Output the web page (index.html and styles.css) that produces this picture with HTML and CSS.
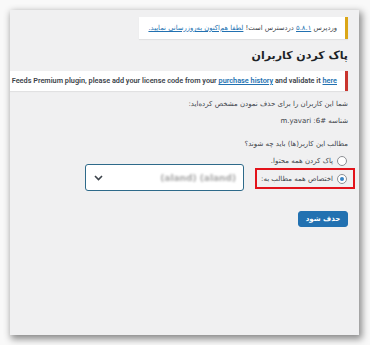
FILE: index.html
```html
<!DOCTYPE html>
<html lang="fa">
<head>
<meta charset="utf-8">
<link rel="stylesheet" href="styles.css">
</head>
<body>
<div class="card" dir="rtl">
  <div class="notice notice-update">
    وردپرس <a href="#">۵.۸.۱</a> دردسترس است! <a href="#">لطفا هم‌اکنون به‌روزرسانی نمایید.</a>
  </div>
  <h1 class="title">پاک کردن کاربران</h1>
  <div class="notice notice-error">
    <span class="ltr">To receive updates for RSS Feeds Premium plugin, please add your license code from your <a href="#">purchase history</a> and validate it <a href="#">here</a></span>
  </div>
  <p class="intro">شما این کاربران را برای حذف نمودن مشخص کرده‌اید:</p>
  <p class="user">شناسه #6: m.yavari</p>
  <p class="question">مطالب این کاربر(ها) باید چه شوند؟</p>
  <div class="option option-first">
    <span class="radio"></span>
    <span>پاک کردن همه محتوا.</span>
  </div>
  <div class="option-row">
    <div class="option highlight">
      <span class="radio checked"></span>
      <span>اختصاص همه مطالب به:</span>
    </div>
    <div class="select">
      <span class="blurred">(aland) (aland)</span>
      <svg class="chev" width="9" height="6" viewBox="0 0 9 6"><path d="M1 1l3.5 3.5L8 1" fill="none" stroke="#3c434a" stroke-width="1.6"/></svg>
    </div>
  </div>
  <div class="actions">
    <button class="btn">حذف شود</button>
  </div>
</div>
</body>
</html>
```
FILE: styles.css
```css
html, body {
  margin: 0;
  padding: 0;
}
body {
  background: #f9f9f9;
  width: 370px;
  height: 345px;
  overflow: hidden;
  font-family: "DejaVu Sans", "Noto Sans", sans-serif;
  color: #3c434a;
}
.card {
  margin: 10px 0 0 10px;
  width: 349px;
  height: 325px;
  background: #f0f0f1;
  box-shadow: 2px 3px 7px 1px rgba(0, 0, 0, 0.45);
  box-sizing: border-box;
  padding: 7px 11px 0 0;
  overflow: hidden;
  direction: rtl;
}
.notice {
  background: #fff;
  box-shadow: 0 1px 1px rgba(0, 0, 0, 0.06);
  font-size: 7px;
  line-height: 10px;
  box-sizing: border-box;
}
.notice a {
  color: #2271b1;
  text-decoration: underline;
}
.notice-update {
  display: inline-block;
  width: 209px;
  height: 22px;
  padding: 6px 8px 0 0;
  border-right: 3px solid #dba617;
  vertical-align: top;
  white-space: nowrap;
  font-size: 6.8px;
}
.title {
  margin: 0;
  padding: 9px 0 0 0;
  font-size: 11px;
  line-height: 16px;
  font-weight: bold;
  color: #1d2327;
  box-sizing: border-box;
  height: 32px;
}
.notice-error {
  height: 20px;
  padding: 5px 8px 0 0;
  border-right: 3px solid #c9352f;
  white-space: nowrap;
  overflow: hidden;
  font-family: Roboto, "Liberation Sans", sans-serif;
  font-weight: 600;
  font-size: 7.3px;
}
.ltr {
  direction: ltr;
  unicode-bidi: isolate;
}
p {
  margin: 0;
  font-size: 7px;
  line-height: 10px;
}
.intro {
  margin-top: 8px;
}
.user {
  margin-top: 7px;
}
.question {
  margin-top: 13px;
}
.option {
  display: flex;
  align-items: center;
  gap: 4px;
  font-size: 7px;
  line-height: 10px;
  padding-right: 1px;
}
.option-first {
  margin-top: 7px;
  height: 10px;
  margin-bottom: -2px;
}
.radio {
  width: 8px;
  height: 8px;
  border: 1px solid #8c8f94;
  border-radius: 50%;
  background: #fff;
  flex: none;
  box-sizing: content-box;
  display: flex;
  align-items: center;
  justify-content: center;
}
.radio.checked::after {
  content: "";
  width: 4px;
  height: 4px;
  border-radius: 50%;
  background: #3582c4;
}
.option-row {
  display: flex;
  align-items: center;
  gap: 11px;
}
.highlight {
  width: 100px;
  height: 21px;
  box-sizing: border-box;
  border: 2px solid #e3131b;
  margin-right: -7px;
  padding-right: 6px;
  margin-top: 2px;
}
.select {
  width: 159px;
  height: 27px;
  box-sizing: border-box;
  background: #fff;
  border: 1.5px solid #2e6a8a;
  border-radius: 3px;
  display: flex;
  align-items: center;
  justify-content: space-between;
  padding: 0 7px 0 8px;
}
.blurred {
  font-family: "DejaVu Sans", sans-serif;
  font-size: 9px;
  font-weight: bold;
  color: #a8a8a8;
  filter: blur(1.3px);
  direction: ltr;
}
.chev {
  display: block;
}
.actions {
  margin-top: 15px;
}
.btn {
  width: 50px;
  height: 16px;
  background: #2271b1;
  border: 1px solid #2271b1;
  border-radius: 3px;
  color: #fff;
  font-family: "DejaVu Sans", sans-serif;
  font-size: 7px;
  font-weight: bold;
  padding: 0;
  line-height: 14px;
}
```
